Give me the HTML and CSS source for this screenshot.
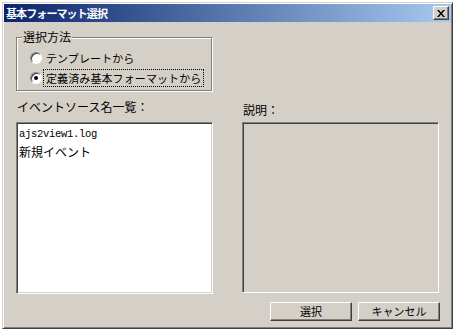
FILE: index.html
```html
<!DOCTYPE html>
<html lang="ja">
<head>
<meta charset="utf-8">
<link rel="stylesheet" href="styles.css">
</head>
<body>
<div class="window">
  <div class="titlebar">
    <span class="title">基本フォーマット選択</span>
    <span class="close"><svg width="8" height="7" viewBox="0 0 8 7"><path d="M0 0h2l2 2.5 2-2.5h2l-3 3.5 3 3.5h-2l-2-2.5-2 2.5h-2l3-3.5z" fill="#000"/></svg></span>
  </div>
  <div class="content">
    <div class="group">
      <span class="legend">選択方法</span>
      <div class="radio"><span class="dot"></span><span class="rtext">テンプレートから</span></div>
      <div class="radio"><span class="dot checked"></span><span class="rtext focus">定義済み基本フォーマットから</span></div>
    </div>
    <div class="panes">
      <div class="pane">
        <div class="label">イベントソース名一覧：</div>
        <div class="listbox">
          <div class="item mono">ajs2view1.log</div>
          <div class="item">新規イベント</div>
        </div>
      </div>
      <div class="pane right">
        <div class="label">説明：</div>
        <div class="descbox"></div>
      </div>
    </div>
    <div class="buttons">
      <button class="btn">選択</button>
      <button class="btn">キャンセル</button>
    </div>
  </div>
</div>
</body>
</html>
```
FILE: styles.css
```css
html, body {
  margin: 0;
  padding: 0;
  background: #ffffff;
}
body {
  font-family: "Noto Sans CJK JP", "DejaVu Sans", sans-serif;
  font-size: 12px;
  color: #000;
}
.window {
  margin: 2px 0 0 2px;
  width: 451px;
  height: 327px;
  background: #d4d0c8;
  border-top: 1px solid #d4d0c8;
  border-left: 1px solid #d4d0c8;
  border-right: 1px solid #404040;
  border-bottom: 1px solid #404040;
  box-shadow: inset 1px 1px 0 #ffffff, inset -1px -1px 0 #808080;
  padding: 1px;
  box-sizing: border-box;
  display: flex;
  flex-direction: column;
}
.titlebar {
  height: 18px;
  flex: none;
  background: linear-gradient(to right, #0a246a, #a6caf0);
  display: flex;
  align-items: center;
  justify-content: space-between;
  padding: 0 2px 0 2px;
}
.title {
  color: #fff;
  font-weight: bold;
  font-size: 11px;
  letter-spacing: -0.9px;
  line-height: 14px;
}
.close {
  width: 16px;
  height: 14px;
  background: #d4d0c8;
  box-sizing: border-box;
  border-top: 1px solid #fff;
  border-left: 1px solid #fff;
  border-right: 1px solid #404040;
  border-bottom: 1px solid #404040;
  box-shadow: inset -1px -1px 0 #808080;
  display: flex;
  align-items: center;
  justify-content: center;
}
.content {
  flex: 1;
  display: flex;
  flex-direction: column;
  padding: 0 0 0 12px;
}
.group {
  position: relative;
  margin-top: 15px;
  width: 196px;
  height: 54px;
  box-sizing: border-box;
  border: 1px solid #808080;
  box-shadow: 1px 1px 0 #fff, inset 1px 1px 0 #fff;
  padding: 12px 0 0 13px;
  display: flex;
  flex-direction: column;
  gap: 4px;
}
.legend {
  position: absolute;
  top: -8px;
  left: 5px;
  padding: 0 1px;
  background: #d4d0c8;
  line-height: 14px;
}
.radio {
  display: flex;
  align-items: center;
  height: 16px;
}
.dot {
  flex: none;
  width: 12px;
  height: 12px;
  box-sizing: border-box;
  border-radius: 50%;
  background: #fff;
  border: 1px solid;
  border-color: #808080 #fff #fff #808080;
  box-shadow: inset 1px 1px 0 #404040;
  position: relative;
  margin-right: 2px;
}
.dot.checked::after {
  content: "";
  position: absolute;
  left: 3px;
  top: 3px;
  width: 4px;
  height: 4px;
  border-radius: 50%;
  background: #000;
}
.rtext {
  white-space: nowrap;
  font-size: 11px;
  letter-spacing: 0.1px;
  line-height: 16px;
  padding: 0 2px;
}
.rtext.focus {
  outline: 1px dotted #000;
  outline-offset: 0;
}
.panes {
  display: flex;
  gap: 29px;
  margin-top: 9px;
}
.pane {
  width: 197px;
  display: flex;
  flex-direction: column;
}
.pane.right {
  margin-top: 3px;
}
.label {
  line-height: 14px;
  padding-left: 1px;
  white-space: nowrap;
}
.listbox {
  margin-top: 8px;
  height: 172px;
  background: #fff;
  box-sizing: border-box;
  border: 1px solid;
  border-color: #808080 #fff #fff #808080;
  box-shadow: inset 1px 1px 0 #404040, inset -1px -1px 0 #d4d0c8;
  padding: 2px 2px;
}
.item {
  line-height: 18px;
}
.item.mono {
  font-family: "Liberation Mono", "DejaVu Sans Mono", monospace;
  font-size: 10.5px;
  letter-spacing: -0.3px;
}
.descbox {
  margin-top: 5px;
  height: 171px;
  box-sizing: border-box;
  border: 1px solid;
  border-color: #808080 #fff #fff #808080;
  box-shadow: inset 1px 1px 0 #404040, inset -1px -1px 0 #d4d0c8;
}
.buttons {
  display: flex;
  justify-content: flex-end;
  gap: 6px;
  margin-top: 8px;
  margin-right: 11px;
}
.btn {
  width: 82px;
  height: 19px;
  margin: 0;
  padding: 0;
  font-family: inherit;
  font-size: 11px;
  line-height: 15px;
  background: #d4d0c8;
  box-sizing: border-box;
  border-top: 1px solid #fff;
  border-left: 1px solid #fff;
  border-right: 1px solid #404040;
  border-bottom: 1px solid #404040;
  box-shadow: inset -1px -1px 0 #808080;
  color: #000;
}
```
